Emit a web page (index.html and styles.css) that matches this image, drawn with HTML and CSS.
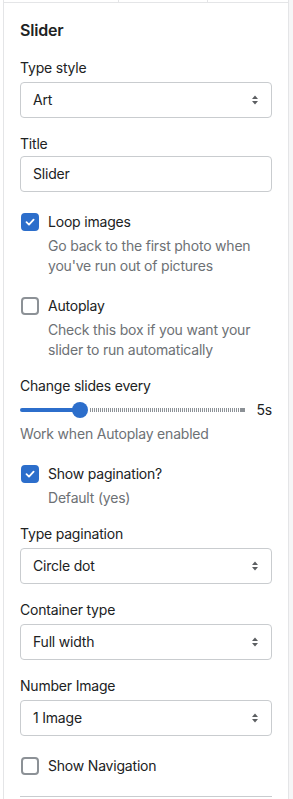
FILE: index.html
```html
<!DOCTYPE html>
<html lang="en">
<head>
<meta charset="utf-8">
<title>Slider settings</title>
<link rel="stylesheet" href="styles.css">
</head>
<body>
<div class="page">
  <div class="gutter"></div>
  <div class="panel">
    <div class="tabs"><span class="tab tab-a"></span><span class="tab tab-b"></span><span class="tab tab-c"></span></div>
    <div class="content">
      <h2 class="heading">Slider</h2>

      <div class="field">
        <div class="label">Type style</div>
        <div class="select"><span>Art</span><svg class="arrows" width="6" height="10" viewBox="0 0 6 10"><polygon points="0,4 3,0.5 6,4"/><polygon points="0,6 3,9.5 6,6"/></svg></div>
      </div>

      <div class="field">
        <div class="label">Title</div>
        <div class="input">Slider</div>
      </div>

      <div class="check">
        <div class="check-row"><span class="box checked"><svg width="12" height="12" viewBox="0 0 12 12"><path d="M2.5 6.2 L5 8.6 L9.6 3.6"/></svg></span><span>Loop images</span></div>
        <div class="help">Go back to the first photo when you've run out of pictures</div>
      </div>

      <div class="check">
        <div class="check-row"><span class="box"></span><span>Autoplay</span></div>
        <div class="help">Check this box if you want your slider to run automatically</div>
      </div>

      <div class="range-field">
        <div class="label">Change slides every</div>
        <div class="range-row">
          <div class="range">
            <span class="fill"></span><span class="thumb"></span><span class="ticks"></span><span class="cap"></span>
          </div>
          <span class="value">5s</span>
        </div>
        <div class="help-plain">Work when Autoplay enabled</div>
      </div>

      <div class="check">
        <div class="check-row"><span class="box checked"><svg width="12" height="12" viewBox="0 0 12 12"><path d="M2.5 6.2 L5 8.6 L9.6 3.6"/></svg></span><span>Show pagination?</span></div>
        <div class="help">Default (yes)</div>
      </div>

      <div class="field">
        <div class="label">Type pagination</div>
        <div class="select"><span>Circle dot</span><svg class="arrows" width="6" height="10" viewBox="0 0 6 10"><polygon points="0,4 3,0.5 6,4"/><polygon points="0,6 3,9.5 6,6"/></svg></div>
      </div>

      <div class="field">
        <div class="label">Container type</div>
        <div class="select"><span>Full width</span><svg class="arrows" width="6" height="10" viewBox="0 0 6 10"><polygon points="0,4 3,0.5 6,4"/><polygon points="0,6 3,9.5 6,6"/></svg></div>
      </div>

      <div class="field">
        <div class="label">Number Image</div>
        <div class="select"><span>1 Image</span><svg class="arrows" width="6" height="10" viewBox="0 0 6 10"><polygon points="0,4 3,0.5 6,4"/><polygon points="0,6 3,9.5 6,6"/></svg></div>
      </div>

      <div class="check">
        <div class="check-row"><span class="box"></span><span>Show Navigation</span></div>
      </div>

      <div class="divider"></div>
    </div>
  </div>
  <div class="rest"></div>
</div>
</body>
</html>
```

FILE: styles.css
```css
* { box-sizing: border-box; }
html, body { margin: 0; padding: 0; }
body {
  font-family: "Inter", "Liberation Sans", sans-serif;
  font-size: 14px;
  line-height: 20px;
  letter-spacing: -0.2px;
  color: #202223;
  background: #ffffff;
}
.page { display: flex; min-height: 799px; }
.gutter { width: 3px; flex: none; background: #ffffff; }
.rest { flex: 1; background: #f6f6f7; }
.panel {
  width: 286px;
  flex: none;
  border-left: 1px solid #e4e5e7;
  border-right: 1px solid #e4e5e7;
  background: #ffffff;
  overflow: hidden;
}
.tabs { display: flex; height: 3px; border-bottom: 1px solid #e4e5e7; }
.tab { display: block; height: 2px; }
.tab-a { width: 115px; border-right: 1px solid #e4e5e7; }
.tab-b { width: 89px; border-right: 1px solid #e4e5e7; }
.tab-c { flex: 1; }
.content {
  padding: 15px 16px 0 16px;
  display: flex;
  flex-direction: column;
  gap: 16px;
}
.heading {
  margin: 0;
  font-size: 16px;
  line-height: 24px;
  font-weight: 600;
}
.field { display: flex; flex-direction: column; }
.label { line-height: 20px; margin-bottom: 4px; }
.select, .input {
  height: 36px;
  border: 1px solid #c9cccf;
  border-radius: 4px;
  display: flex;
  align-items: center;
  padding: 0 13px 0 12px;
  background: #ffffff;
}
.input { margin-top: -2px; }
.select span { flex: 1; }
.arrows { fill: #5c5f62; }
.check { margin-top: 4px; display: flex; flex-direction: column; gap: 4px; }
.check-row { display: flex; align-items: center; height: 20px; }
.box {
  width: 18px;
  height: 18px;
  margin-left: 1px;
  margin-right: 9px;
  border: 2px solid #8c9196;
  border-radius: 4px;
  display: flex;
  align-items: center;
  justify-content: center;
}
.box.checked { background: #2c6ecb; border-color: #2c6ecb; }
.box svg path { fill: none; stroke: #ffffff; stroke-width: 1.8; stroke-linecap: round; stroke-linejoin: round; }
.help { padding-left: 28px; color: #6d7175; }
.help-plain { color: #6d7175; margin-top: 4px; }
.range-field { display: flex; flex-direction: column; }
.range-row { display: flex; align-items: center; height: 20px; }
.range { display: flex; align-items: center; width: 225px; }
.fill { width: 54px; height: 4px; background: #2c6ecb; border-radius: 2px 0 0 2px; }
.thumb {
  width: 16px; height: 16px; border-radius: 50%;
  background: #2c6ecb; margin-left: -2px;
}
.ticks {
  flex: 1; height: 4px; margin-left: 2px;
  background: repeating-linear-gradient(to right, #8c9196 0 1px, transparent 1px 2px);
}
.cap { width: 4px; height: 4px; background: #8c9196; }
.value { margin-left: auto; }
.divider { margin-top: 4px; border-top: 1px solid #c9cccf; height: 10px; }
```
